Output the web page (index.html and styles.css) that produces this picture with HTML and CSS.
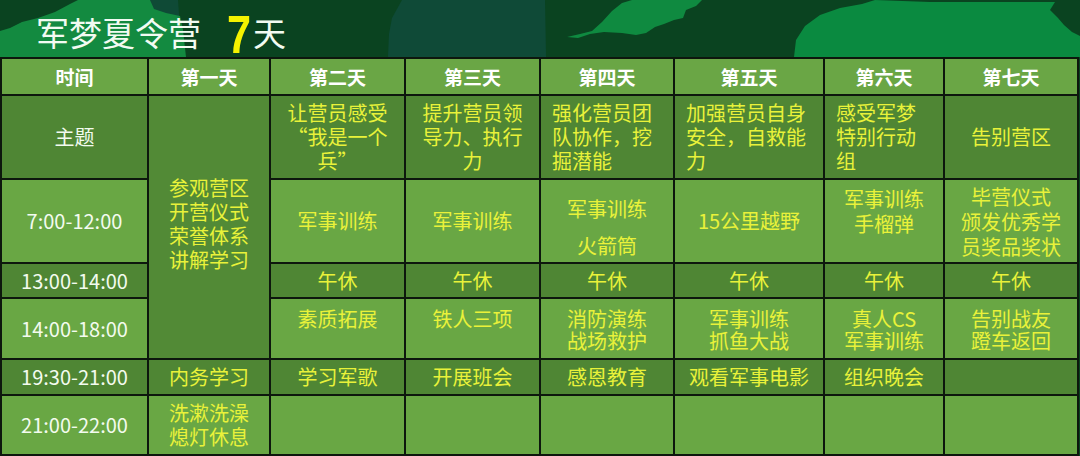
FILE: index.html
```html
<!DOCTYPE html>
<html lang="zh-CN">
<head>
<meta charset="utf-8">
<title>军梦夏令营 7天</title>
<link rel="stylesheet" href="styles.css">
</head>
<body>
<header class="banner">
  <svg class="camo" viewBox="0 0 1080 57" preserveAspectRatio="none" aria-hidden="true">
    <path fill="#0f4a36" d="M150 0 L178 0 L180 30 L172 45 L160 40 L152 20 Z"/>
    <path fill="#138a40" d="M0 31 L10 28 L22 22 L38 18 L55 12 L70 4 L78 0 L150 0 L154 9 L166 13 L180 16 L183 30 L186 57 L0 57 Z"/>
    <path fill="#0f4a37" d="M402 0 L545 0 L546 57 L388 57 L389 34 L392 18 Z"/>
    <path fill="#0f8a40" d="M567 37 L580 34 L592 31 L602 22 L612 11 L622 3 L632 0 L702 0 L696 6 L686 10 L683 18 L674 20 L664 24 L655 27 L646 33 L636 35 L622 33 L604 32 L590 34 L578 38 Z"/>
    <path fill="#0a8a40" d="M794 57 L796 40 L805 26 L820 15 L840 8 L862 4 L875 0 L930 2 L1055 2 L1050 10 L1058 18 L1064 25 L1072 32 L1080 36 L1080 57 Z"/>
  </svg>
  <h1 class="title"><span class="title-main">军梦夏令营</span><span class="title-num">7</span><span class="title-day">天</span></h1>
</header>

<main class="schedule">
  <div class="cell head">时间</div>
  <div class="cell head">第一天</div>
  <div class="cell head">第二天</div>
  <div class="cell head">第三天</div>
  <div class="cell head">第四天</div>
  <div class="cell head">第五天</div>
  <div class="cell head">第六天</div>
  <div class="cell head">第七天</div>

  <div class="cell dark time">主题</div>
  <div class="cell dark act merged lh24">参观营区<br>开营仪式<br>荣誉体系<br>讲解学习</div>
  <div class="cell dark act lh24"><p class="wrap w5 anyw">让营员感受“我是一个兵”</p></div>
  <div class="cell dark act lh24"><p class="wrap w5">提升营员领导力、执行力</p></div>
  <div class="cell dark act lh24 left"><p class="wrap w5">强化营员团队协作，挖掘潜能</p></div>
  <div class="cell dark act lh24 left"><p class="wrap w6">加强营员自身安全，自救能力</p></div>
  <div class="cell dark act lh24 left"><p class="wrap w4">感受军梦特别行动组</p></div>
  <div class="cell dark act">告别营区</div>

  <div class="cell light time">7:00-12:00</div>
  <div class="cell light act">军事训练</div>
  <div class="cell light act">军事训练</div>
  <div class="cell light act spaced">军事训练<br>火箭筒</div>
  <div class="cell light act">15公里越野</div>
  <div class="cell light act lh25 raised">军事训练<br>手榴弹</div>
  <div class="cell light act lh25"><p class="wrap w5">毕营仪式<br>颁发优秀学员奖品奖状</p></div>

  <div class="cell dark time">13:00-14:00</div>
  <div class="cell dark act">午休</div>
  <div class="cell dark act">午休</div>
  <div class="cell dark act">午休</div>
  <div class="cell dark act">午休</div>
  <div class="cell dark act">午休</div>
  <div class="cell dark act">午休</div>

  <div class="cell light time">14:00-18:00</div>
  <div class="cell light act top">素质拓展</div>
  <div class="cell light act top">铁人三项</div>
  <div class="cell light act top">消防演练<br>战场救护</div>
  <div class="cell light act top">军事训练<br>抓鱼大战</div>
  <div class="cell light act top">真人CS<br>军事训练</div>
  <div class="cell light act top">告别战友<br>蹬车返回</div>

  <div class="cell dark time">19:30-21:00</div>
  <div class="cell dark act">内务学习</div>
  <div class="cell dark act">学习军歌</div>
  <div class="cell dark act">开展班会</div>
  <div class="cell dark act">感恩教育</div>
  <div class="cell dark act">观看军事电影</div>
  <div class="cell dark act">组织晚会</div>
  <div class="cell dark act"></div>

  <div class="cell light time">21:00-22:00</div>
  <div class="cell light act lh24">洗漱洗澡<br>熄灯休息</div>
  <div class="cell light act"></div>
  <div class="cell light act"></div>
  <div class="cell light act"></div>
  <div class="cell light act"></div>
  <div class="cell light act"></div>
  <div class="cell light act"></div>
</main>
</body>
</html>
```

FILE: styles.css
```css
* {
  box-sizing: border-box;
}

html, body {
  margin: 0;
  padding: 0;
}

body {
  width: 1080px;
  height: 456px;
  overflow: hidden;
  background: #0a4320;
  font-family: "Noto Sans CJK SC", "Noto Sans", sans-serif;
}

.banner {
  position: relative;
  height: 57px;
  background: #0a4320;
}

.camo {
  position: absolute;
  left: 0;
  top: 0;
  width: 1080px;
  height: 57px;
}

.title {
  position: relative;
  margin: 0;
  height: 57px;
  padding-left: 36px;
  display: flex;
  align-items: baseline;
  font-weight: 400;
  color: #f2fbf2;
  line-height: 57px;
}

.title-main {
  font-size: 33px;
}

.title-num {
  display: inline-block;
  margin-left: 26px;
  font-family: "Liberation Sans", "Noto Sans", sans-serif;
  font-weight: 700;
  font-size: 54px;
  line-height: 54px;
  color: #f6f200;
  transform: translateY(7px) scaleX(0.8);
  transform-origin: left bottom;
}

.title-day {
  margin-left: -4px;
  font-size: 33px;
}

.schedule {
  display: grid;
  width: 1079px;
  grid-template-columns: 145px 120px 133px 133px 132px 148px 118px 132px;
  grid-template-rows: 35px 82px 82px 33px 59px 34px 58px;
  gap: 2px;
  padding: 2px;
  background: #0d170d;
}

.cell {
  display: flex;
  align-items: center;
  justify-content: center;
  text-align: center;
  font-size: 20px;
  line-height: 24px;
  white-space: nowrap;
}

.wrap {
  margin: 0;
  white-space: normal;
  line-break: strict;
}

.anyw {
  line-break: anywhere;
}

.w4 {
  width: 81px;
}

.w5 {
  width: 101px;
}

.w6 {
  width: 121px;
}

.head {
  background: #6aa645;
  color: #ffffff;
  font-weight: 700;
  font-size: 19px;
}

.dark {
  background: #4f8634;
}

.light {
  background: #69a744;
}

.time {
  color: #f3fbef;
  font-size: 20px;
}

.act {
  color: #e9f23a;
}

.merged {
  grid-row: span 4;
  background: #528a36;
  padding-bottom: 6px;
}

.lh24 {
  line-height: 24px;
}

.lh25 {
  line-height: 25px;
}

.left {
  justify-content: flex-start;
  text-align: left;
  padding-left: 11px;
}

.spaced {
  line-height: 37px;
  padding-top: 11px;
}

.raised {
  padding-bottom: 21px;
}

.top {
  align-items: flex-start;
  padding-top: 9px;
  line-height: 22px;
}
```
